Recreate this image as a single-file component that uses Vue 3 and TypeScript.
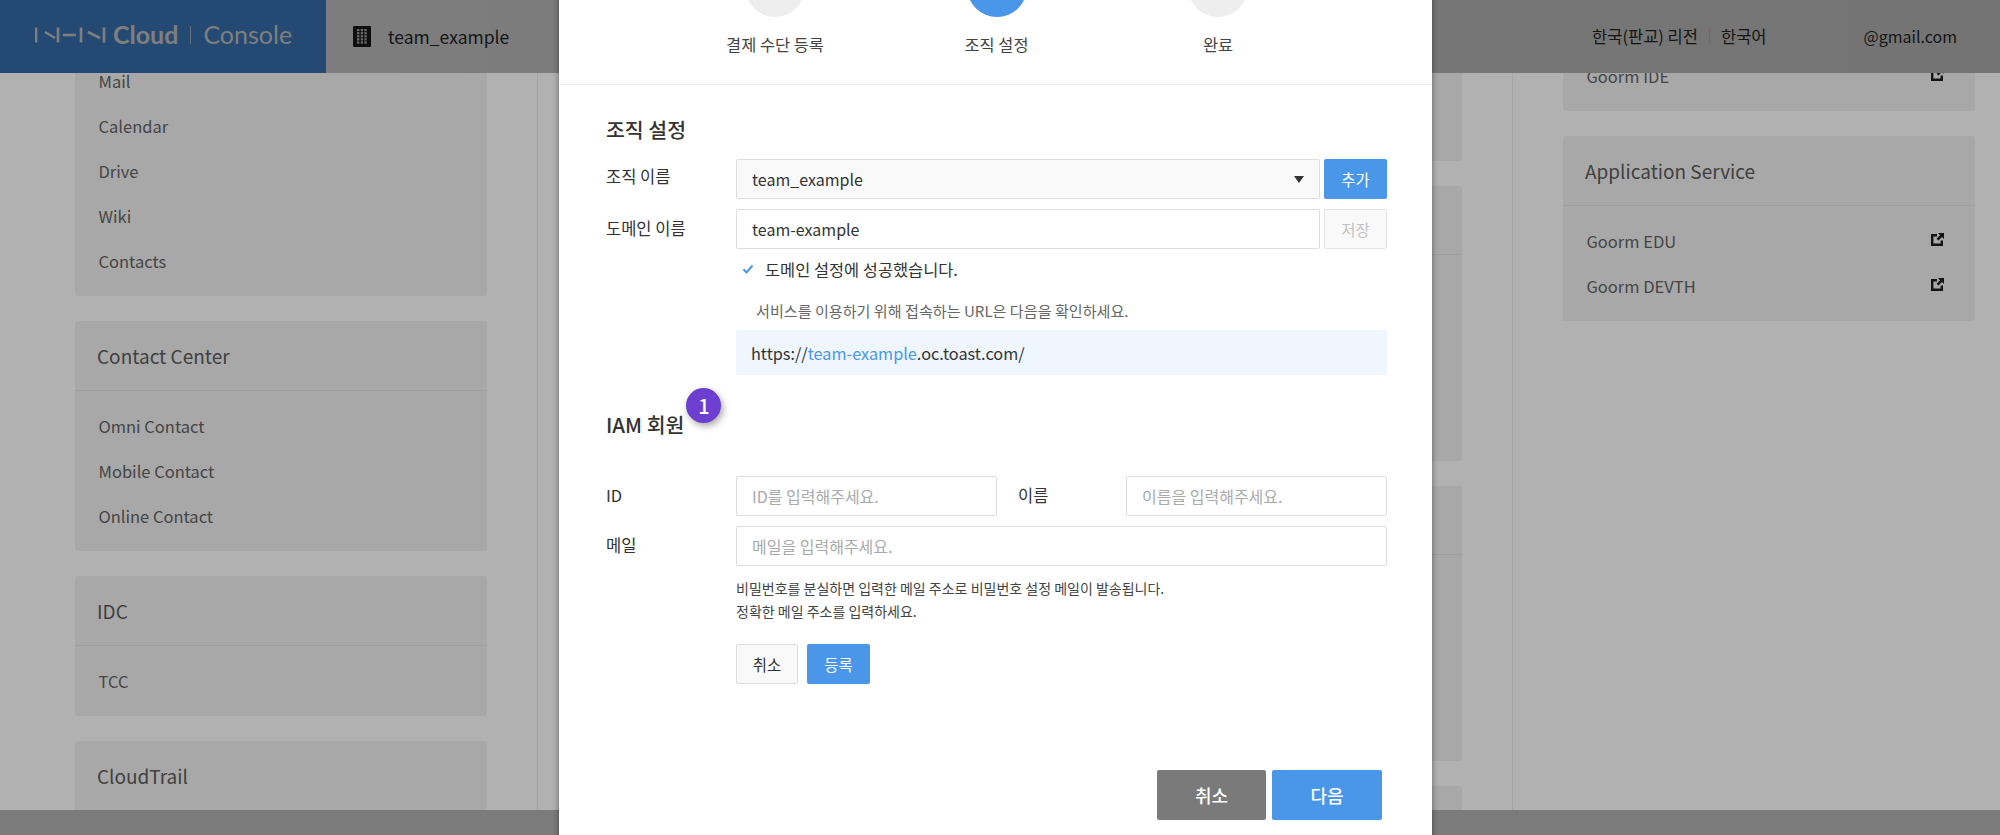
<script setup lang="ts">
interface Item { label: string; ext?: boolean }
interface Card { title?: string; items: Item[] }
const left: Card[] = [
  { items: ['Mail', 'Calendar', 'Drive', 'Wiki', 'Contacts'].map((label) => ({ label })) },
  { title: 'Contact Center', items: ['Omni Contact', 'Mobile Contact', 'Online Contact'].map((label) => ({ label })) },
  { title: 'IDC', items: [{ label: 'TCC' }] },
  { title: 'CloudTrail', items: [] },
]
const right: Card[] = [
  { items: [{ label: 'Goorm IDE', ext: true }] },
  { title: 'Application Service', items: [{ label: 'Goorm EDU', ext: true }, { label: 'Goorm DEVTH', ext: true }] },
]
const middleHeights = [161, 275, 275, 120]
const steps = [
  { label: '결제 수단 등록', active: false },
  { label: '조직 설정', active: true },
  { label: '완료', active: false },
]
</script>

<template>
  <div class="page">
    <div class="columns">
      <section class="col col-left">
        <div v-for="(c, i) in left" :key="i" class="card">
          <h3 v-if="c.title" class="card-title">{{ c.title }}</h3>
          <ul v-if="c.items.length" class="card-list">
            <li v-for="it in c.items" :key="it.label">{{ it.label }}</li>
          </ul>
        </div>
      </section>
      <section class="col col-mid">
        <div v-for="(h, i) in middleHeights" :key="i" class="card mid-card" :style="{ height: h + 'px' }">
          <div v-if="i > 0" class="mid-head"></div>
        </div>
      </section>
      <section class="col col-right">
        <div v-for="(c, i) in right" :key="i" class="card">
          <h3 v-if="c.title" class="card-title">{{ c.title }}</h3>
          <ul class="card-list">
            <li v-for="it in c.items" :key="it.label" class="ext-row">
              <span>{{ it.label }}</span>
              <svg class="ext" viewBox="0 0 13 13" width="13" height="13">
                <path d="M0 1h6v2.4H2.4v7.2h7.2V7.5H12V13H0z" fill="#1c1c1c" />
                <path d="M7 0h6v6l-2-2-3.6 3.6L5.6 5.8 9 2.2z" fill="#1c1c1c" />
              </svg>
            </li>
          </ul>
        </div>
      </section>
    </div>

    <header class="topbar">
      <div class="brand">
        <svg class="nhn" viewBox="0 0 71 18" width="71" height="18">
          <g fill="none" stroke="#b6b6b6" stroke-width="2.6">
            <path d="M1 1.5v15M10 6l10 6M23 1.5v15M28 9h13M46 1.5v15M53 6l12 6M69 1.5v15" />
          </g>
        </svg>
        <span class="cloud">Cloud</span>
        <span class="brand-sep"></span>
        <span class="console">Console</span>
      </div>
      <div class="org">
        <svg viewBox="0 0 18 21" width="18" height="21">
          <rect width="18" height="21" rx="1" fill="#151515" />
          <g fill="#9a9a9a">
            <rect v-for="n in 15" :key="n" :x="4 + ((n - 1) % 3) * 3.7" :y="3 + Math.floor((n - 1) / 3) * 3.1" width="2.4" height="2.2" />
          </g>
        </svg>
        <span>team_example</span>
      </div>
      <div class="top-right">
        <span>한국(판교) 리전</span>
        <i class="top-sep"></i>
        <span>한국어</span>
        <span class="mail">@gmail.com</span>
      </div>
    </header>
    <footer class="footbar"></footer>
    <div class="dim"></div>

    <main class="modal">
      <div class="steps">
        <div v-for="s in steps" :key="s.label" class="step">
          <span class="dot" :class="{ on: s.active }"></span>
          <span class="step-label">{{ s.label }}</span>
        </div>
      </div>
      <div class="body">
        <h2 class="sec">조직 설정</h2>
        <div class="row">
          <label class="first-label">조직 이름</label>
          <div class="select">team_example<span class="caret"></span></div>
          <button class="btn primary side">추가</button>
        </div>
        <div class="row">
          <label>도메인 이름</label>
          <input class="input grow" value="team-example" />
          <button class="btn disabled side">저장</button>
        </div>
        <div class="sub">
          <p class="ok">
            <svg viewBox="0 0 12 12" width="12" height="12"><path d="M1.5 6.3l3 3.2L10.5 2.5" fill="none" stroke="#4a96e8" stroke-width="2" /></svg>
            도메인 설정에 성공했습니다.
          </p>
          <p class="note">서비스를 이용하기 위해 접속하는 URL은 다음을 확인하세요.</p>
          <div class="url">https://<b>team-example</b>.oc.toast.com/</div>
        </div>
        <h2 class="sec iam"><span class="iam-text">IAM 회원<span class="badge">1</span></span></h2>
        <div class="row">
          <label>ID</label>
          <input class="input half" placeholder="ID를 입력해주세요." />
          <label class="mid-label">이름</label>
          <input class="input half2" placeholder="이름을 입력해주세요." />
        </div>
        <div class="row">
          <label>메일</label>
          <input class="input grow" placeholder="메일을 입력해주세요." />
        </div>
        <div class="sub">
          <p class="help">비밀번호를 분실하면 입력한 메일 주소로 비밀번호 설정 메일이 발송됩니다.<br />정확한 메일 주소를 입력하세요.</p>
          <div class="actions">
            <button class="btn plain">취소</button>
            <button class="btn primary">등록</button>
          </div>
        </div>
      </div>
      <div class="foot">
        <button class="btn big dark">취소</button>
        <button class="btn big primary">다음</button>
      </div>
    </main>
  </div>
</template>

<style>
html, body { margin: 0; height: 100%; overflow: hidden; background: #fff; }
</style>

<style scoped>
* { box-sizing: border-box; }
.page {
  position: relative; width: 2000px; height: 835px; overflow: hidden; background: #fefefe;
  font-family: "Noto Sans CJK KR", "Noto Sans", sans-serif; font-size: 16px; color: #222;
}
.columns { display: flex; height: 835px; overflow: hidden; }
.col { display: flex; flex-direction: column; gap: 25px; flex: none; }
.col-left { width: 538px; padding: 46px 50px 0 75px; border-right: 1px solid #ececec; }
.col-mid { width: 975px; padding: 0 50px; border-right: 1px solid #ececec; }
.col-right { flex: 1; padding: 41px 25px 0 50px; }
.card { background: #f1f1f1; border-radius: 3px; flex: none; }
.card-title {
  margin: 0; height: 70px; display: flex; align-items: center; padding: 0 22px; border-bottom: 1px solid #e4e4e4;
  font-size: 19px; font-weight: 400; color: #5c5c5c;
}
.card-list { list-style: none; margin: 0; padding: 12px 24px 13px 23.5px; }
.card-list li { height: 45px; display: flex; align-items: center; font-size: 16.5px; color: #636363; padding-top: 1px; }
.ext-row { justify-content: space-between; }
.ext { margin: -3px 7px 0 0; }
.mid-card { position: relative; }
.mid-head { height: 69px; border-bottom: 1px solid #e4e4e4; }
.topbar {
  position: absolute; left: 0; top: 0; right: 0; height: 73px; display: flex; align-items: center;
  background: linear-gradient(90deg, #b6b6b6, #a6a6a6);
}
.brand { width: 326px; height: 73px; background: #346ba6; display: flex; align-items: center; padding: 0 0 4px 35px; color: #b6b6b6; flex: none; }
.nhn { margin-right: 7px; }
.cloud { font-family: Lato, sans-serif; font-weight: 700; font-size: 25px; line-height: 1; }
.brand-sep { width: 1px; height: 18px; background: #8d9fb4; margin: 0 12px; }
.console { font-family: Lato, sans-serif; font-size: 25px; line-height: 1; }
.org { display: flex; align-items: center; gap: 17px; padding: 0 0 1px 27px; font-size: 17.5px; color: #1e1e1e; flex: 1; }
.top-right { display: flex; align-items: center; padding: 0 43px 2px 0; font-size: 16.5px; color: #1e1e1e; }
.top-sep { width: 1px; height: 16px; background: #9b9b9b; margin: 0 11px; }
.mail { margin-left: 97px; font-size: 16px; }
.footbar { position: absolute; left: 0; right: 0; bottom: 0; height: 25px; background: #b1b1b1; }
.dim { position: absolute; inset: 0; background: rgba(0, 0, 0, 0.3); }
.modal {
  position: absolute; left: 559px; top: -43px; width: 873px; height: 900px; background: #fff;
  box-shadow: 0 0 6px rgba(0, 0, 0, 0.45); color: #333;
}
.steps { height: 128px; display: flex; justify-content: center; border-bottom: 1px solid #ececec; padding-left: 2px; }
.step { width: 221.5px; display: flex; flex-direction: column; align-items: center; }
.dot { width: 60px; height: 60px; border-radius: 50%; background: #eee; flex: none; }
.dot.on { background: #4a96e8; }
.step-label { margin-top: 16px; font-size: 16.4px; line-height: 22px; color: #444; }
.body { padding: 0 45px 0 47px; }
.sec { margin: 0; font-size: 20.5px; font-weight: 500; line-height: 26px; color: #333; padding-top: 31px; height: 74px; }
.row { display: flex; align-items: center; height: 40px; margin-bottom: 10px; }
.row label { width: 130px; flex: none; font-size: 16.5px; color: #333; padding-bottom: 2px; }
.row .first-label { padding-bottom: 6px; }
.row .mid-label { width: 129px; padding-left: 21px; }
.input, .select {
  height: 100%; border: 1px solid #ddd; border-radius: 2px; padding: 0 15px; font: inherit; font-size: 16px; color: #333; background: #fff; outline: none;
}
.input::placeholder { color: #aaa; opacity: 1; }
.grow { flex: 1; min-width: 0; }
.half { width: 261px; }
.half2 { width: 261px; }
.select { flex: 1; display: flex; align-items: center; justify-content: space-between; background: #f9f9f9; }
.caret { width: 0; height: 0; border: 5px solid transparent; border-top: 7px solid #333; border-bottom: 0; }
.btn { border: 1px solid transparent; border-radius: 2px; font: inherit; font-size: 15.5px; cursor: pointer; padding: 0; }
.side { width: 63px; height: 40px; margin-left: 4px; flex: none; }
.primary { background: #4a96e8; color: #fff; }
.disabled { background: #f9f9f9; border-color: #e4e4e4; color: #c4c4c4; }
.plain { background: #f9f9f9; border-color: #ddd; color: #333; width: 62px; height: 40px; }
.sub { padding-left: 130px; }
.ok { margin: 0; height: 20px; display: flex; align-items: center; gap: 11px; padding-left: 6px; font-size: 16.4px; color: #333; }
.note { margin: 0; height: 20px; padding-left: 20px; margin-top: 21px; font-size: 15.1px; line-height: 20px; color: #666; }
.url { margin-top: 10px; height: 45px; display: flex; align-items: center; padding-left: 15px; background: #eff6fe; border-radius: 2px; font-size: 16.25px; color: #333; white-space: pre; }
.url b { font-weight: 400; color: #4a96e8; }
.iam { height: 101px; padding-top: 36px; }
.iam-text { position: relative; display: inline-block; }
.badge {
  position: absolute; left: calc(100% + 2px); top: -23px; width: 35px; height: 35px; border-radius: 50%; background: #6c3fd1;
  color: #fff; font-size: 20px; font-weight: 500; display: flex; align-items: center; justify-content: center;
  box-shadow: 2px 3px 7px rgba(0, 0, 0, 0.35);
}
.help { margin: 0; padding-top: 1px; font-size: 14px; line-height: 23px; color: #444; }
.actions { display: flex; gap: 9px; margin-top: 21px; }
.actions .primary { width: 63px; height: 40px; }
.foot { position: absolute; left: 598px; top: 813px; display: flex; gap: 6px; }
.big { width: 109px; height: 50px; font-size: 18px; font-weight: 500; }
.big.primary { width: 110px; }
.dark { background: #7a7a7a; color: #fff; }
</style>
